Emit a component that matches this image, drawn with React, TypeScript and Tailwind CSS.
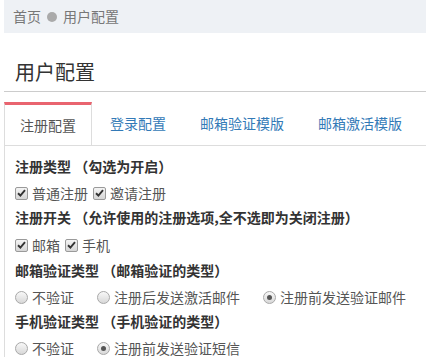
import React from 'react';

const font = { fontFamily: '"Noto Sans CJK SC", "Noto Sans", sans-serif' };

function Check({ label }: { label: string }) {
  return (
    <span className="inline-flex items-center shrink-0 whitespace-nowrap mr-[5px]">
      <span className="w-[13px] h-[13px] shrink-0 rounded-[2px] border border-[#9a9a9a] bg-gradient-to-b from-[#f4f4f4] to-[#d6d6d6] flex items-center justify-center mr-[4px]">
        <svg width="9" height="8" viewBox="0 0 9 8">
          <path d="M1 4.2 L3.4 6.5 L8 1.2" fill="none" stroke="#333" strokeWidth="1.9" />
        </svg>
      </span>
      <span>{label}</span>
    </span>
  );
}

function Radio({ label, on }: { label: string; on?: boolean }) {
  return (
    <span className="inline-flex items-center shrink-0 whitespace-nowrap mr-[23px]">
      <span className="w-[13px] h-[13px] shrink-0 rounded-full border border-[#a8a8a8] bg-gradient-to-b from-[#f8f8f8] to-[#d8d8d8] flex items-center justify-center mr-[4px]">
        {on && <span className="w-[5px] h-[5px] rounded-full bg-[#555]" />}
      </span>
      <span>{label}</span>
    </span>
  );
}

const tabs = ['注册配置', '登录配置', '邮箱验证模版', '邮箱激活模版'];

export default function App() {
  return (
    <div className="min-h-screen bg-white pl-1 text-[14px] text-[#555] overflow-hidden" style={font}>
      <div className="h-[33px] bg-[#eef1f5] flex items-center pl-[9px] text-[#777]">
        <span>首页</span>
        <span className="w-[10px] h-[10px] rounded-full bg-[#aaa] mx-[6px]" />
        <span>用户配置</span>
      </div>

      <div className="mt-[27px] pl-[11px] pb-[7px] border-b border-[#ccc] text-[20px] leading-[24px] text-[#333]">
        用户配置
      </div>

      <div className="mt-[10px] flex border-b border-[#ddd]">
        {tabs.map((t, i) => (
          <div
            key={t}
            className={
              i === 0
                ? 'h-[43px] px-[15px] mr-[2px] -mb-px flex items-center bg-white border-x border-[#ddd] border-t-[3px] border-t-[#e9646f] text-[#555] whitespace-nowrap'
                : 'h-[43px] px-[15px] mr-[2px] flex items-center border border-transparent text-[#337ab7] whitespace-nowrap'
            }
          >
            {t}
          </div>
        ))}
      </div>

      <div className="border-l border-[#ddd] pl-[10px] pt-[10px] pb-4 whitespace-nowrap">
        <div className="font-bold text-[#333] leading-[20px]">注册类型 （勾选为开启）</div>
        <div className="mt-[6px] h-[22px] flex items-center">
          <Check label="普通注册" />
          <Check label="邀请注册" />
        </div>
        <div className="mt-[3px] font-bold text-[#333] leading-[20px]">注册开关 （允许使用的注册选项,全不选即为关闭注册）</div>
        <div className="mt-[7px] h-[22px] flex items-center">
          <Check label="邮箱" />
          <Check label="手机" />
        </div>
        <div className="mt-[4px] font-bold text-[#333] leading-[20px]">邮箱验证类型 （邮箱验证的类型）</div>
        <div className="mt-[6px] h-[22px] flex items-center">
          <Radio label="不验证" />
          <Radio label="注册后发送激活邮件" />
          <Radio label="注册前发送验证邮件" on />
        </div>
        <div className="mt-[3px] font-bold text-[#333] leading-[20px]">手机验证类型 （手机验证的类型）</div>
        <div className="mt-[6px] h-[22px] flex items-center">
          <Radio label="不验证" />
          <Radio label="注册前发送验证短信" on />
        </div>
      </div>
    </div>
  );
}
